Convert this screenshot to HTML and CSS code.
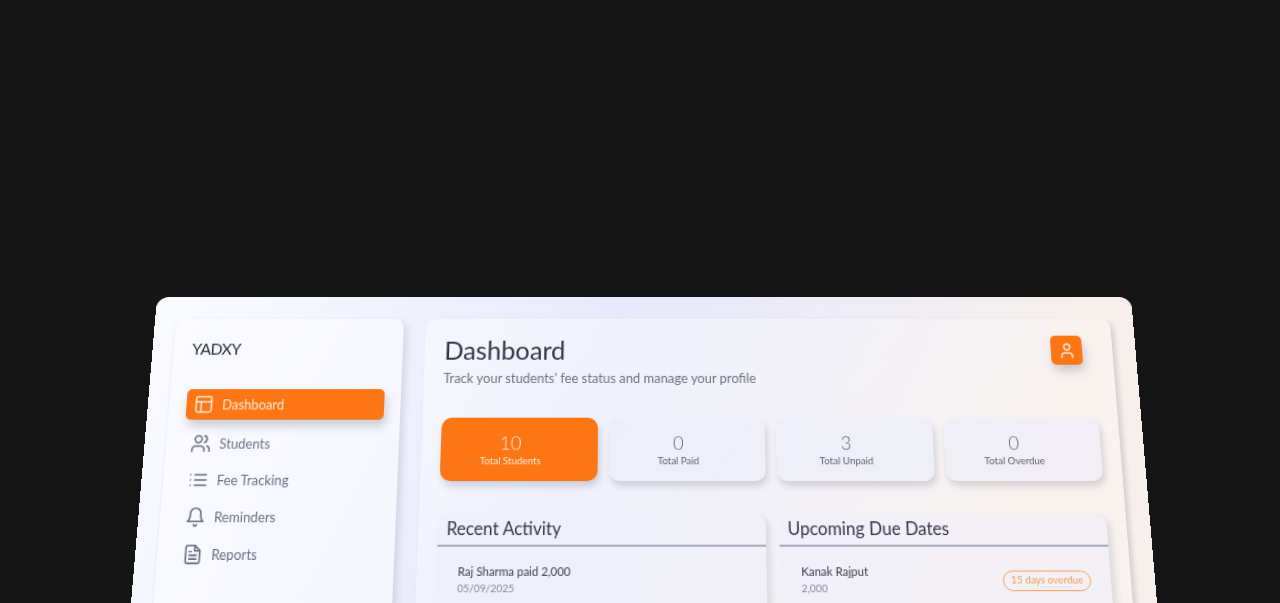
FILE: index.html
```html
<!DOCTYPE html>
<html lang="en">
<head>
    <meta charset="UTF-8">
    <meta name="viewport" content="width=device-width, initial-scale=1.0">
    <title>YADXY Dashboard</title>
    <link rel="stylesheet" href="styles.css">
</head>
<body>

    <div class="stage">
        <div class="app">

            <aside class="sidebar">
                <div class="logo">YADXY</div>
                <nav class="nav">
                    <a href="#" class="nav-item active">
                        <svg class="icon" viewBox="0 0 24 24"><rect x="3" y="3" width="18" height="18" rx="2"/><path d="M3 9h18"/><path d="M9 21V9"/></svg>
                        Dashboard
                    </a>
                    <a href="#" class="nav-item">
                        <svg class="icon" viewBox="0 0 24 24"><path d="M16 21v-2a4 4 0 0 0-4-4H6a4 4 0 0 0-4 4v2"/><circle cx="9" cy="7" r="4"/><path d="M22 21v-2a4 4 0 0 0-3-3.87"/><path d="M16 3.13a4 4 0 0 1 0 7.75"/></svg>
                        Students
                    </a>
                    <a href="#" class="nav-item">
                        <svg class="icon" viewBox="0 0 24 24"><path d="M8 6h13"/><path d="M8 12h13"/><path d="M8 18h13"/><path d="M3 6h.01"/><path d="M3 12h.01"/><path d="M3 18h.01"/></svg>
                        Fee Tracking
                    </a>
                    <a href="#" class="nav-item">
                        <svg class="icon" viewBox="0 0 24 24"><path d="M6 8a6 6 0 0 1 12 0c0 7 3 9 3 9H3s3-2 3-9"/><path d="M10.3 21a1.94 1.94 0 0 0 3.4 0"/></svg>
                        Reminders
                    </a>
                    <a href="#" class="nav-item">
                        <svg class="icon" viewBox="0 0 24 24"><path d="M14 2H6a2 2 0 0 0-2 2v16a2 2 0 0 0 2 2h12a2 2 0 0 0 2-2V8z"/><path d="M14 2v6h6"/><path d="M16 13H8"/><path d="M16 17H8"/><path d="M10 9H8"/></svg>
                        Reports
                    </a>
                </nav>
            </aside>

            <main class="main">
                <header class="page-header">
                    <div>
                        <h1>Dashboard</h1>
                        <p class="subtitle">Track your students' fee status and manage your profile</p>
                    </div>
                    <button class="profile-btn">
                        <svg class="icon" viewBox="0 0 24 24"><path d="M19 21v-2a4 4 0 0 0-4-4H9a4 4 0 0 0-4 4v2"/><circle cx="12" cy="7" r="4"/></svg>
                    </button>
                </header>

                <section class="stats">
                    <div class="stat highlight">
                        <div class="stat-value">10</div>
                        <div class="stat-label">Total Students</div>
                    </div>
                    <div class="stat">
                        <div class="stat-value">0</div>
                        <div class="stat-label">Total Paid</div>
                    </div>
                    <div class="stat">
                        <div class="stat-value">3</div>
                        <div class="stat-label">Total Unpaid</div>
                    </div>
                    <div class="stat">
                        <div class="stat-value">0</div>
                        <div class="stat-label">Total Overdue</div>
                    </div>
                </section>

                <section class="lists">
                    <div class="list-card">
                        <h2>Recent Activity</h2>
                        <div class="list-row">
                            <div>
                                <div class="row-title">Raj Sharma paid 2,000</div>
                                <div class="row-sub">05/09/2025</div>
                            </div>
                        </div>
                    </div>
                    <div class="list-card">
                        <h2>Upcoming Due Dates</h2>
                        <div class="list-row">
                            <div>
                                <div class="row-title">Kanak Rajput</div>
                                <div class="row-sub">2,000</div>
                            </div>
                            <span class="badge">15 days overdue</span>
                        </div>
                    </div>
                </section>
            </main>

        </div>
    </div>

</body>
</html>
```

FILE: styles.css
```css
html, body {
    margin: 0;
    padding: 0;
    height: 100%;
    overflow: hidden;
    background: #151515;
    font-family: 'Lato', sans-serif;
    font-weight: 300;
}
.stage {
    height: 603px;
    box-sizing: border-box;
    padding: 297px 0 0 156.5px;
    overflow: hidden;
    perspective: 1000px;
    perspective-origin: 643.5px 297px;
}
/* tilted sheet, everything inside is flat */
.app {
    width: 974px;
    height: 420px;
    box-sizing: border-box;
    padding: 22px 22.8px 22px 21.2px;
    display: grid;
    grid-template-columns: 227px 1fr;
    gap: 22px;
    border-radius: 12px;
    background: linear-gradient(115deg, #fafbff 0%, #f3f5fe 15%, #e7eafb 40%, #eeecf6 60%, #f7efeb 80%);
    transform: rotateX(9.9deg);
    transform-origin: 50% 0;
}
.sidebar {
    padding: 20px 16px 20px 16.8px;
    border-radius: 10px;
    background: rgba(250, 251, 255, 0.65);
    box-shadow: 4px 3px 6px rgba(70, 70, 90, 0.14), -1px 0 2px rgba(120, 120, 170, 0.06);
}
.logo {
    padding-left: 1.2px;
    font-size: 15.6px;
    line-height: 20px;
    letter-spacing: -0.4px;
    font-weight: 400;
    color: #2b2d3a;
    margin-bottom: 30px;
}
.nav {
    display: flex;
    flex-direction: column;
    gap: 5px;
}
.nav-item {
    display: flex;
    align-items: center;
    gap: 7.5px;
    height: 30px;
    padding-left: 7.5px;
    font-size: 12.8px;
    font-weight: 400;
    color: #6d7082;
    text-decoration: none;
    border-radius: 5px;
}
.nav-item.active {
    margin-bottom: 3px;
    background: #fd7615;
    color: #fde6d5;
    box-shadow: 2px 6px 10px rgba(70, 70, 90, 0.25);
}
.icon {
    width: 20px;
    height: 20px;
    flex-shrink: 0;
    fill: none;
    stroke: currentColor;
    stroke-width: 1.9;
    stroke-linecap: round;
    stroke-linejoin: round;
}
.main {
    padding: 16px 19px 0 19px;
    border-radius: 10px;
    background: linear-gradient(125deg, rgba(255, 255, 255, 0.42), rgba(255, 255, 255, 0.2));
    box-shadow: 3px 3px 5px rgba(70, 70, 90, 0.2);
}
.page-header {
    display: flex;
    justify-content: space-between;
    align-items: flex-start;
}
h1 {
    margin: 0;
    font-size: 25.2px;
    font-weight: 400;
    line-height: 30px;
    color: #33364a;
}
.subtitle {
    margin: 5px 0 0;
    font-size: 12.8px;
    font-weight: 400;
    line-height: 16px;
    color: #6e7180;
}
.profile-btn {
    width: 31px;
    height: 29px;
    margin: 1px 11px 0 0;
    padding: 0;
    display: flex;
    align-items: center;
    justify-content: center;
    border: none;
    border-radius: 5px;
    background: #fd7615;
    color: #fdeee2;
    box-shadow: 2px 6px 10px rgba(70, 70, 90, 0.25);
}
.profile-btn .icon {
    width: 18px;
    height: 18px;
}
.stats {
    margin-top: 31px;
    display: grid;
    grid-template-columns: repeat(4, 1fr);
    gap: 11px;
}
.stat {
    height: 61px;
    box-sizing: border-box;
    padding: 12.5px 17px 0 0;
    text-align: center;
    border-radius: 10px;
    background: rgba(235, 236, 248, 0.6);
    color: #5f6274;
    box-shadow: 2px 5px 6px rgba(70, 70, 90, 0.2);
}
.stat.highlight {
    background: #fd7615;
    color: #fde6d5;
}
.stat-value {
    font-size: 18px;
    line-height: 22px;
}
.stat-label {
    margin-top: 0.5px;
    font-size: 9.5px;
    font-weight: 400;
    line-height: 14px;
}
.lists {
    margin-top: 32px;
    display: grid;
    grid-template-columns: 1fr 1fr;
    gap: 12.5px;
}
.list-card {
    height: 140px;
    border-radius: 10px;
    background: rgba(238, 238, 249, 0.55);
    box-shadow: 4px 3px 6px rgba(70, 70, 90, 0.14);
}
h2 {
    margin: 0;
    padding: 0 8px;
    height: 28px;
    line-height: 27px;
    font-size: 16.6px;
    font-weight: 400;
    color: #35384a;
    border-bottom: 2px solid #a9acbc;
}
.list-row {
    display: flex;
    justify-content: space-between;
    align-items: center;
    padding: 14.5px 19px 14.5px 20px;
}
.row-title {
    font-size: 11px;
    font-weight: 400;
    line-height: 16px;
    color: #3a3d4c;
}
.row-sub {
    font-size: 9.8px;
    font-weight: 400;
    line-height: 14px;
    color: #85889a;
}
.badge {
    width: 84px;
    box-sizing: border-box;
    height: 19.5px;
    margin-top: 3.5px;
    line-height: 16.5px;
    text-align: center;
    font-size: 9.5px;
    font-weight: 400;
    color: #f59a55;
    border: 1.5px solid #f7a565;
    border-radius: 10px;
}
```
